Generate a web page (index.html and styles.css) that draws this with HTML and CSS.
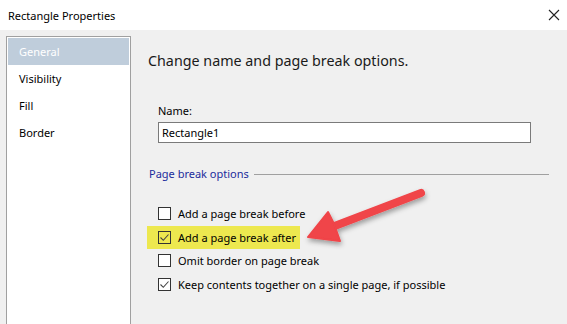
FILE: index.html
```html
<!DOCTYPE html>
<html lang="en">
	<head>
		<meta charset="utf-8">
		<title>Rectangle Properties</title>
		<link rel="stylesheet" href="styles.css">
	</head>
	<body>
		<div id="dialog">

			<div class="titlebar">
				<div class="title">Rectangle Properties</div>
				<div class="close">
					<svg width="12" height="12" viewBox="0 0 12 12"><path d="M1 1 L11 11 M11 1 L1 11" stroke="#222" stroke-width="1.1" fill="none"/></svg>
				</div>
			</div>

			<div class="body">

				<div class="nav">
					<div class="navItem selected">General</div>
					<div class="navItem">Visibility</div>
					<div class="navItem">Fill</div>
					<div class="navItem">Border</div>
				</div>

				<div class="content">
					<div class="heading">Change name and page break options.</div>

					<div class="field">
						<label class="fieldLabel">Name:</label>
						<div class="textBox">Rectangle1</div>
					</div>

					<div class="group">
						<span class="groupTitle">Page break options</span>
						<span class="groupLine"></span>
					</div>

					<div class="checks">
						<div class="check"><span class="box"></span>Add a page break before</div>
						<div class="check highlight"><span class="box"><svg width="11" height="11" viewBox="0 0 11 11"><path d="M1.5 5.5 L4.3 8.3 L9.5 2.5" stroke="#444" stroke-width="1.1" fill="none"/></svg></span>Add a page break after</div>
						<div class="check"><span class="box"></span>Omit border on page break</div>
						<div class="check"><span class="box"><svg width="11" height="11" viewBox="0 0 11 11"><path d="M1.5 5.5 L4.3 8.3 L9.5 2.5" stroke="#444" stroke-width="1.1" fill="none"/></svg></span>Keep contents together on a single page, if possible</div>
					</div>
				</div>

			</div>

			<!-- annotation arrow -->
			<svg class="arrow" width="567" height="324" viewBox="0 0 567 324">
				<defs>
					<filter id="shadow" x="-20%" y="-40%" width="140%" height="180%">
						<feDropShadow dx="1" dy="3" stdDeviation="2.5" flood-color="#000" flood-opacity="0.35"/>
					</filter>
				</defs>
				<g filter="url(#shadow)">
					<line x1="421" y1="193" x2="332" y2="227" stroke="#f04448" stroke-width="8" stroke-linecap="round"/>
					<path d="M308 237 L328 212 L334 224 L340 241 Z" fill="#f04448" stroke="#f04448" stroke-width="2" stroke-linejoin="round"/>
				</g>
			</svg>

		</div>
	</body>
</html>
```

FILE: styles.css
```css
body{
	margin: 0;
	padding: 0;
	font-family: "Noto Sans", "Open Sans", sans-serif;
	overflow: hidden;
	color: #000;
}

#dialog{
	position: relative;
	width: 567px;
	height: 324px;
	background-color: #f0f0f0;
	overflow: hidden;
}

.titlebar{
	display: flex;
	justify-content: space-between;
	align-items: center;
	height: 30px;
	padding: 0 7px 0 8px;
	background-color: #fff;
	font-size: 11px;
}

.close{
	display: flex;
	align-items: center;
}

.body{
	display: flex;
	height: 294px;
}

.nav{
	width: 123px;
	margin: 6px 0 0 6px;
	padding-top: 1px;
	border: 1px solid #a0a0a0;
	border-bottom: none;
	background-color: #fff;
	font-size: 11px;
}

.navItem{
	height: 27px;
	line-height: 27px;
	padding-left: 11px;
	margin: 0 1px 0 1px;
}

.navItem.selected{
	background-color: #bfcddb;
	color: #fff;
}

.content{
	flex: 1;
	padding: 21px 18px 0 17px;
}

.heading{
	font-size: 14.3px;
	line-height: 20px;
	color: #1a1a1a;
}

.field{
	margin-top: 33px;
	padding-left: 10px;
}

.fieldLabel{
	display: block;
	font-size: 11px;
	line-height: 14px;
}

.textBox{
	width: 368px;
	height: 19px;
	margin-top: 4px;
	border: 1px solid #7a7a7a;
	background-color: #fff;
	font-size: 11px;
	line-height: 19px;
	padding-left: 3px;
}

.group{
	display: flex;
	align-items: center;
	margin-top: 23px;
	padding-left: 1px;
}

.groupTitle{
	font-size: 11px;
	color: #1c2c9c;
	line-height: 16px;
}

.groupLine{
	flex: 1;
	height: 1px;
	margin-left: 5px;
	background-color: #a0a0a0;
}

.checks{
	margin-top: 20px;
}

.check{
	display: flex;
	align-items: center;
	box-sizing: border-box;
	width: 153px;
	height: 23.5px;
	padding-left: 11px;
	margin-left: -1px;
	font-size: 11px;
	white-space: nowrap;
}

.highlight{
	background-color: #ede84f;
}

.box{
	display: flex;
	flex: none;
	align-items: center;
	justify-content: center;
	width: 11px;
	height: 11px;
	margin-right: 7px;
	border: 1px solid #333;
	background-color: #fff;
}

.highlight .box{
	background-color: transparent;
}

.arrow{
	position: absolute;
	left: 0;
	top: 0;
	pointer-events: none;
}
```
